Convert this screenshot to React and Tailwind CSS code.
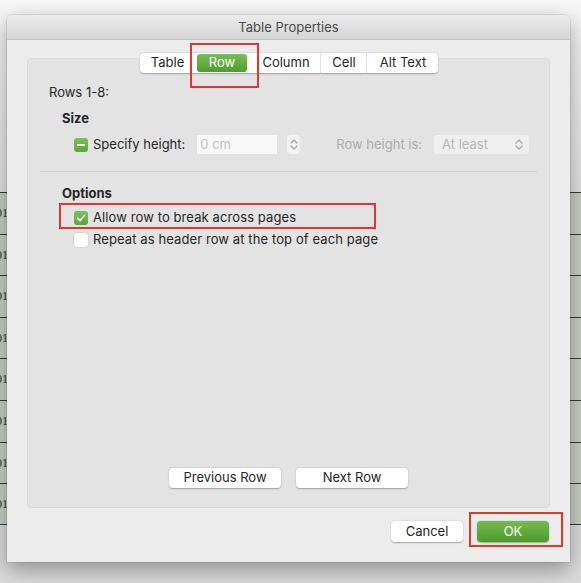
import React from "react";

function UpDown({ color = "#9a9a9a" }) {
  return (
    <svg width="8" height="13" viewBox="0 0 8 13" fill="none">
      <path d="M1 5 L4 2 L7 5" stroke={color} strokeWidth="1.3" strokeLinecap="round" strokeLinejoin="round" />
      <path d="M1 8 L4 11 L7 8" stroke={color} strokeWidth="1.3" strokeLinecap="round" strokeLinejoin="round" />
    </svg>
  );
}

function GreenBox({ kind }) {
  return (
    <div className="w-[14px] h-[14px] rounded-[3px] bg-gradient-to-b from-[#7cc05a] to-[#5aa63a] flex items-center justify-center shrink-0">
      {kind === "minus" ? (
        <div className="w-[8px] h-[2px] bg-white rounded-[1px]" />
      ) : (
        <svg width="10" height="10" viewBox="0 0 10 10" fill="none">
          <path d="M1.5 5.2 L4 7.6 L8.6 2.2" stroke="white" strokeWidth="1.6" strokeLinecap="round" strokeLinejoin="round" />
        </svg>
      )}
    </div>
  );
}

function DocRow({ last }) {
  return (
    <div className={"h-[41.6px] bg-[#c8cfc2] border-t border-[#3a3a3a] flex items-start " + (last ? "border-b" : "")}>
      <span className="-ml-[4px] mt-[11px] text-[12px] text-[#333] font-['Liberation_Serif',serif]">01</span>
    </div>
  );
}

export default function App() {
  const tabs = [
    { label: "Table", w: "w-[54px]" },
    { label: "Row", w: "w-[57px]", active: true },
    { label: "Column", w: "w-[70px]" },
    { label: "Cell", w: "w-[46px]" },
    { label: "Alt Text", w: "w-[71px]" },
  ];

  return (
    <div className="relative w-[581px] h-[583px] overflow-hidden bg-[#f3f3f3] font-['Inter','Noto_Sans',sans-serif] text-[13px] text-[#262626]">
      {/* document underneath the dialog */}
      <div className="flex flex-col">
        <div className="h-[192px] bg-gradient-to-b from-[#f6f6f6] to-[#e2e2e2]" />
        {[0, 1, 2, 3, 4, 5, 6, 7].map((i) => (
          <DocRow key={i} last={i === 7} />
        ))}
        <div className="h-[60px] bg-[#dcdcdc]" />
      </div>

      {/* dialog */}
      <div className="absolute left-[7px] top-[15px] w-[563px] h-[547px] bg-[#ececec] rounded-t-[5px] shadow-[0_8px_22px_rgba(0,0,0,0.35),0_0_0_0.5px_rgba(0,0,0,0.15)] flex flex-col">
        <div className="h-[25px] pt-[2px] rounded-t-[5px] bg-gradient-to-b from-[#ebebeb] to-[#d5d5d5] border-b border-[#c4c4c4] flex items-center justify-center text-[#4a4a4a]">
          Table Properties
        </div>

        <div className="pl-[20px] pt-[18px]">
          <div className="w-[523px] h-[450px] bg-[#e3e3e3] rounded-[4px] border border-[#dcdcdc] flex flex-col">
            {/* tabs */}
            <div className="flex justify-center -mt-[6px]">
              <div className="flex items-center h-[20px] bg-white rounded-[4px] shadow-[0_0.5px_1.5px_rgba(0,0,0,0.3)]">
                {tabs.map((t, i) => (
                  <div
                    key={t.label}
                    className={
                      t.w +
                      " h-full flex items-center justify-center " +
                      (i > 1 && i < 4 ? "border-r border-[#e2e2e2] " : "")
                    }
                  >
                    {t.active ? (
                      <div className="w-[50px] h-[18px] rounded-[3px] bg-gradient-to-b from-[#78bd55] to-[#4f9c2e] text-white flex items-center justify-center">
                        {t.label}
                      </div>
                    ) : (
                      <span className="pl-[2px]">{t.label}</span>
                    )}
                  </div>
                ))}
              </div>
            </div>

            <div className="pl-[21px] mt-[11px] leading-[16px]">Rows 1-8:</div>
            <div className="pl-[34px] mt-[10px] leading-[16px] font-bold">Size</div>

            <div className="pl-[46px] mt-[9px] flex items-center h-[19px]">
              <GreenBox kind="minus" />
              <span className="ml-[5px]">Specify height:</span>
              <div className="ml-[12px] w-[80px] h-[19px] bg-[#f8f8f8] px-[3px] flex items-center text-[#c2c2c2]">0 cm</div>
              <div className="ml-[10px] w-[13px] h-[19px] rounded-[4px] bg-[#f3f3f3] flex items-center justify-center">
                <UpDown color="#a8a8a8" />
              </div>
              <span className="ml-[36px] text-[#ababab]">Row height is:</span>
              <div className="ml-[12px] w-[95px] h-[19px] rounded-[3px] bg-[#efefef] pl-[8px] pr-[6px] flex items-center justify-between text-[#b6b6b6]">
                <span>At least</span>
                <UpDown color="#a8a8a8" />
              </div>
            </div>

            <div className="mx-[12px] mt-[17px] h-px bg-[#d2d2d2]" />

            <div className="pl-[34px] mt-[13px] leading-[16px] font-bold">Options</div>
            <div className="pl-[46px] mt-[9px] flex items-center h-[16px]">
              <GreenBox kind="check" />
              <span className="ml-[5px] tracking-[0.1px]">Allow row to break across pages</span>
            </div>
            <div className="pl-[46px] mt-[6px] flex items-center h-[16px]">
              <div className="w-[14px] h-[14px] rounded-[3px] bg-white shadow-[0_0_0_0.5px_rgba(0,0,0,0.12)] shrink-0" />
              <span className="ml-[5px] tracking-[0.1px]">Repeat as header row at the top of each page</span>
            </div>

            <div className="mt-auto mb-[19px] flex justify-center gap-[15px]">
              <div className="w-[112px] h-[20px] bg-white rounded-[4px] shadow-[0_0.5px_1.5px_rgba(0,0,0,0.3)] flex items-center justify-center">
                Previous Row
              </div>
              <div className="w-[112px] h-[20px] bg-white rounded-[4px] shadow-[0_0.5px_1.5px_rgba(0,0,0,0.3)] flex items-center justify-center">
                Next Row
              </div>
            </div>
          </div>
        </div>

        <div className="mt-[13px] pr-[21px] flex justify-end gap-[14px]">
          <div className="w-[72px] h-[21px] bg-white rounded-[4px] shadow-[0_0.5px_1.5px_rgba(0,0,0,0.3)] flex items-center justify-center">
            Cancel
          </div>
          <div className="w-[72px] h-[21px] rounded-[4px] bg-gradient-to-b from-[#74bb50] to-[#4c9a2b] text-white flex items-center justify-center shadow-[0_0.5px_1.5px_rgba(0,0,0,0.3)]">
            OK
          </div>
        </div>
      </div>

      {/* red annotation frames */}
      <div className="absolute left-[190px] top-[43px] w-[69px] h-[45px] border-[2.5px] border-[#e4372a]" />
      <div className="absolute left-[59px] top-[203px] w-[317px] h-[26px] border-[2.5px] border-[#e4372a]" />
      <div className="absolute left-[469px] top-[512px] w-[94px] h-[35px] border-[2.5px] border-[#e4372a]" />
    </div>
  );
}
